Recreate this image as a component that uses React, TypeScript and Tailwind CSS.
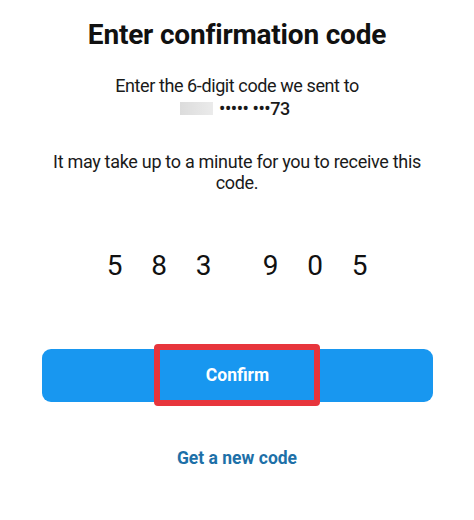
export default function App() {
  const left = ["5", "8", "3"];
  const right = ["9", "0", "5"];
  return (
    <div className="w-[474px] h-[520px] bg-white text-[#111111] flex flex-col items-center" style={{ fontFamily: "Roboto, 'Liberation Sans', sans-serif" }}>
      <h1 className="mt-[18px] text-[28px] leading-[34px] font-bold tracking-[-0.2px]">Enter confirmation code</h1>
      <div className="mt-[22px] text-[18px] leading-[23px] tracking-[-0.4px] text-center text-[#1a1a1a]">
        <div>Enter the 6-digit code we sent to</div>
        <div className="flex items-center justify-center gap-[6px] ml-[-4px]">
          <span className="inline-block w-[33px] h-[13px] bg-gradient-to-r from-[#dcdcdc] to-[#ebebeb] blur-[0.5px]" />
          <span className="font-medium">••••• •••73</span>
        </div>
      </div>
      <div className="mt-[31px] text-[18px] leading-[21px] tracking-[-0.3px] text-center text-[#1a1a1a] w-[400px]">
        It may take up to a minute for you to receive this code.
      </div>
      <div className="mt-[56px] flex text-[28px] leading-[34px]">
        {left.map((d, i) => (
          <span key={"l" + i} className="w-[44.5px] text-center">{d}</span>
        ))}
        <span className="w-[22.5px]" />
        {right.map((d, i) => (
          <span key={"r" + i} className="w-[44.5px] text-center">{d}</span>
        ))}
      </div>
      <div className="mt-[66px] relative w-[391px] h-[53px] ml-[1px] rounded-[9px] bg-[#1897f0] flex items-center justify-center">
        <span className="text-white text-[17.5px] font-bold">Confirm</span>
        <div className="absolute left-[112px] top-[-5px] w-[166px] h-[62px] border-[6px] border-[#e7353c] rounded-[4px]" />
      </div>
      <div className="mt-[46px] text-[17.5px] leading-[20px] font-bold text-[#1d70a8]">Get a new code</div>
    </div>
  );
}
